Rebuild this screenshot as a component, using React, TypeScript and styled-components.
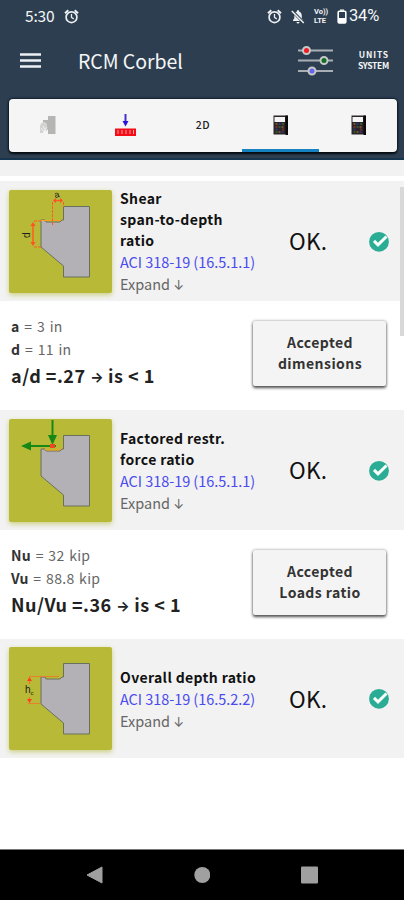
import React from "react";
import styled, { createGlobalStyle } from "styled-components";

const Global = createGlobalStyle`
  * { box-sizing: border-box; }
  body { margin: 0; background: #fff; font-family: "Noto Sans CJK SC", "Noto Sans", sans-serif; }
  svg { display: block; flex: none; }
`;

const Screen = styled.div`
  width: 404px;
  height: 900px;
  display: flex;
  flex-direction: column;
  overflow: hidden;
  background: #fff;
`;

const Header = styled.header`
  height: 160px;
  flex: none;
  background: #2d3e50;
  border-bottom: 2px solid #16354f;
  color: #f4f6f7;
`;

const StatusBar = styled.div`
  height: 32px;
  display: flex;
  align-items: center;
  padding: 0 23px 0 25px;
`;

const Clock = styled.span`
  width: 39px;
  font-size: 15.5px;
  line-height: 30px;
  margin-bottom: 2px;
  letter-spacing: -0.15px;
`;

const StatusIcons = styled.div`
  margin-left: auto;
  display: flex;
  align-items: center;
`;

const Gap = styled.span<{ $w: number }>`
  width: ${(p) => p.$w}px;
`;

const Volte = styled.span`
  width: 15px;
  display: flex;
  flex-direction: column;
  font: 700 7.5px/9px Roboto, sans-serif;
  margin-top: -1px;
`;

const Percent = styled.span`
  width: 32px;
  font: 400 16.5px/30px Roboto, sans-serif;
  letter-spacing: -0.2px;
  white-space: nowrap;
`;

const AppBar = styled.div`
  height: 67px;
  display: flex;
  align-items: center;
  padding: 0 14px 9px 20px;
`;

const AppTitle = styled.h1`
  margin: 0 auto 1px 37px;
  font-size: 19.5px;
  font-weight: 400;
  line-height: 30px;
  letter-spacing: -0.05px;
`;

const Units = styled.div`
  width: 33px;
  margin: 0 0 4px 24px;
  display: flex;
  flex-direction: column;
  align-items: center;
  white-space: nowrap;
  font-weight: 700;
`;

const UnitsTop = styled.span`
  font-size: 8.5px;
  line-height: 11px;
  letter-spacing: 0.85px;
  margin-right: -0.85px;
`;

const UnitsBottom = styled.span`
  font-size: 8.5px;
  line-height: 10px;
  letter-spacing: -0.3px;
`;

const Tabs = styled.nav`
  width: 388px;
  height: 53px;
  margin-left: 9px;
  display: grid;
  grid-template-columns: repeat(5, 1fr);
  background: #f5f5f5;
  border-radius: 4px;
  box-shadow: 0 2px 2px #070d12, 0 0 2px 1px #101d2c;
`;

const Tab = styled.button<{ $active?: boolean }>`
  border: 0;
  padding: 0;
  display: flex;
  align-items: center;
  justify-content: center;
  background: none;
  color: #222;
  font: 500 10.5px/16px "Noto Sans CJK SC", sans-serif;
  letter-spacing: 0.6px;
  border-bottom: 3px solid ${(p) => (p.$active ? "#1782c0" : "transparent")};
  border-top: 2px solid transparent;
`;

const Content = styled.main`
  height: 689px;
  position: relative;
  background: #fff;
`;

const PreviousRow = styled.div`
  height: 16px;
  margin-bottom: 5px;
  background: #f2f2f2;
`;

const Thumb = styled.div`
  position: absolute;
  right: 0;
  top: 27px;
  width: 4px;
  height: 149px;
  background: #d8d8d8;
`;

const Row = styled.section<{ $height: number }>`
  height: ${(p) => p.$height}px;
  display: flex;
  align-items: center;
  padding-left: 9px;
  background: #f2f2f2;
`;

const Sketch = styled.div`
  width: 103px;
  height: 103px;
  flex: none;
  background: #b8ba37;
  border-radius: 2px;
  box-shadow: 0 2px 5px #cccf83;
`;

const Description = styled.div`
  width: 155px;
  margin: 2px 0 0 8px;
  display: flex;
  flex-direction: column;
  white-space: nowrap;
`;

const Name = styled.h2`
  margin: 0;
  color: #111;
  font-size: 14px;
  font-weight: 700;
  line-height: 21px;
  letter-spacing: 0.36px;
  white-space: pre-line;
`;

const Clause = styled.a`
  color: #4a4aef;
  font-size: 14.5px;
  line-height: 22px;
  letter-spacing: -0.05px;
`;

const Expand = styled.span`
  color: #666;
  font-size: 14.5px;
  line-height: 22px;
`;

const Arrow = styled.span<{ $size: number }>`
  font-family: Inter, sans-serif;
  font-size: ${(p) => p.$size}px;
`;

const RightArrow = styled(Arrow)`
  display: inline-block;
  line-height: 14px;
  letter-spacing: 0;
  vertical-align: 1px;
`;

const Verdict = styled.span`
  width: 80px;
  margin: 0 0 2px 14px;
  color: #111;
  font-size: 22.5px;
  line-height: 32px;
  letter-spacing: 0.2px;
`;

const Details = styled.section<{ $height: number }>`
  height: ${(p) => p.$height}px;
  display: flex;
  justify-content: space-between;
  padding: 14px 18px 0 11px;
`;

const Values = styled.div`
  display: flex;
  flex-direction: column;
  white-space: nowrap;
`;

const Value = styled.span`
  color: #666;
  font-size: 14px;
  line-height: 23px;
  letter-spacing: 0.3px;
  word-spacing: 1.2px;
  b { color: #333; }
`;

const Result = styled.strong`
  color: #222;
  font-size: 18px;
  line-height: 28px;
  letter-spacing: 0.5px;
`;

const Accepted = styled.button`
  width: 133px;
  height: 65px;
  margin-top: 6px;
  padding: 0 0 2px 1px;
  border: 0;
  border-radius: 2px;
  background: #f4f4f4;
  box-shadow: 0 2px 3px #555, 0 0 3px #999;
  color: #333;
  font: 700 14px/21px "Noto Sans CJK SC", sans-serif;
  letter-spacing: 0.45px;
  white-space: pre-line;
`;

const NavBar = styled.footer`
  height: 51px;
  display: flex;
  align-items: center;
  background: #000;
  border-top: 1px solid #777;
  padding-left: 86px;
  gap: 91px;
`;

const Alarm = () => (
  <svg width="15" height="15" viewBox="0 0 15 15" fill="none" stroke="#edf0f2">
    <circle cx="7.5" cy="8.2" r="5.4" strokeWidth="1.7" />
    <path d="M1 4.2 4.3 1.3M14 4.2 10.7 1.3" strokeWidth="2" />
    <path d="M7.5 5v3.5l2.3 1.4" strokeWidth="1.3" />
  </svg>
);

const BellOff = () => (
  <svg width="14" height="15" viewBox="0 0 14 15">
    <path d="M2 12V11l1.3-1.4V6.7C3.3 4.6 4.4 3 6 2.6V1.2h2v1.4c1.7.4 2.8 2 2.8 4.1v2.9L12 11v1z" fill="#edf0f2" />
    <path d="M5.5 13h3a1.5 1.5 0 0 1-3 0z" fill="#edf0f2" />
    <path d="M1 1.7 13 14" stroke="#2d3e50" strokeWidth="3" />
    <path d="M.8 2 12.8 14" stroke="#edf0f2" strokeWidth="1.5" />
  </svg>
);

const Battery = () => (
  <svg width="10" height="15" viewBox="0 0 10 15">
    <path d="M3 .5h4v1.3H3z" fill="#fff" />
    <rect x="1.2" y="2.2" width="7.6" height="11.8" rx="1" fill="none" stroke="#fff" strokeWidth="1.6" />
    <path d="M1 9h8v5H1z" fill="#fff" />
  </svg>
);

const Menu = () => (
  <svg width="21" height="16" viewBox="0 0 21 16">
    <path d="M0 1.5h21M0 7.5h21M0 13.5h21" stroke="#edf0f2" strokeWidth="2.7" />
  </svg>
);

const Sliders = () => (
  <svg width="35" height="31" viewBox="0 0 35 31">
    <path d="M0 4.5h35M0 14.5h35M0 25h35" stroke="#a9afb3" strokeWidth="2.2" />
    <g stroke="#c6c9ca" strokeWidth="2">
      <circle cx="8.5" cy="4.5" r="3.5" fill="#f51a20" />
      <circle cx="26" cy="14.5" r="3.5" fill="#146d22" />
      <circle cx="14" cy="25" r="3.5" fill="#6464ec" />
    </g>
  </svg>
);

const CorbelIcon = () => (
  <svg width="17" height="19" viewBox="0 0 17 19">
    <path d="M9 0h7.5v18H9v-4L4 10V4h5z" fill="#b5b6b3" />
    <path d="M1 11c0-3 2-5 5-5l2 2v7l-3-1-1 3H1z" fill="#d3d4d2" />
    <path d="m4 10 2 4 2-3M2 12l2 3" fill="none" stroke="#eee" />
  </svg>
);

const LoadIcon = () => (
  <svg width="23" height="23" viewBox="0 0 23 23">
    <path d="M11.5 0v8" stroke="#4430d0" strokeWidth="2" />
    <path d="M8.5 7h6l-3 5.5z" fill="#2b15d8" />
    <path d="M1 14.5h21V22H1z" fill="#f20d17" />
    <path d="M4 16v4M8 16v4M12 16v4M16 16v4M19.5 16v4" stroke="#ffa1a3" strokeWidth="1" />
  </svg>
);

const Calculator = () => (
  <svg width="15" height="20" viewBox="0 0 15 20">
    <path d="M.5.5h14v19H.5z" fill="#292529" />
    <path d="M1.5 2h10.5v5H1.5z" fill="#f5f5f5" />
    <path d="M12.5.5H15V20h-2.5z" fill="#0c090b" />
    <path d="M2.5 9h2M8.5 12h2M5.5 17h2" stroke="#765026" strokeWidth="2" />
    <path d="M5.5 9h2M2.5 14.5h2M8.5 17h2" stroke="#30366f" strokeWidth="2" />
    <path d="M9 9h2M5.5 12h2M2.5 17h2" stroke="#315631" strokeWidth="2" />
    <path d="M2.5 12h2M9 14.5h2" stroke="#762e30" strokeWidth="2" />
  </svg>
);

const Check = () => (
  <svg width="20" height="21" viewBox="0 0 20 21">
    <circle cx="10" cy="10.8" r="9.9" fill="#2bac94" />
    <path d="m5 9.9 4 4 8.5-8.4" fill="none" stroke="#f8fffc" strokeWidth="3" />
  </svg>
);

type Kind = "span" | "force" | "depth";

const Corbel = ({ kind }: { kind: Kind }) => (
  <svg width="103" height="103" viewBox="0 0 103 103">
    <path
      d="M54.5 16.5h26v70.5h-26V76L32 57V30h4l1 2h14l2-2h1.5z"
      fill="#b3b1b5"
      stroke="#67715e"
      strokeWidth="1"
    />
    {kind === "span" && (
      <g fill="none" stroke="#ff5c22" strokeWidth="1">
        <path d="M32 30.5h20" stroke="#ff9d24" />
        <path d="M43.5 12v24M54.5 12v5M25 31h7M25 57h7" strokeDasharray="3 1" />
        <path d="M45 10.5h8M24 34v20" strokeWidth="1.5" />
        <path d="m47 8-3 2.5 3 2.5zM51 8l3 2.5-3 2.5zM21.5 36l2.5-4 2.5 4zM21.5 52l2.5 4 2.5-4z" fill="#ff5124" stroke="none" />
        <text transform="translate(46 8) rotate(-12)" fill="#222" stroke="none" fontSize="9" fontWeight="500" fontFamily="Liberation Sans">a</text>
        <text transform="translate(21 48) rotate(-90)" fill="#222" stroke="none" fontSize="10" fontFamily="Liberation Sans">d</text>
      </g>
    )}
    {kind === "force" && (
      <g stroke="#168816" fill="#168816">
        <path d="M43.5 1v17M47 27H20" strokeWidth="2" />
        <path d="M39 16h9l-4.5 10zM22 22.5v9L12 27z" stroke="none" />
        <path d="m36 30 1 1h13l3-2" fill="none" stroke="#ff9d24" />
        <path d="M41 25h5v4h-5z" fill="#f6451e" stroke="none" />
      </g>
    )}
    {kind === "depth" && (
      <g fill="none" stroke="#ff6b24">
        <path d="M20 29.5h30M19 56.5h12" stroke="#e7802b" />
        <path d="M20.5 32v5M20.5 50v5" strokeWidth="1" />
        <path d="m18 34 2.5-4 2.5 4zM18 52l2.5 4 2.5-4z" fill="#ff401c" stroke="none" />
        <text x="16" y="46" fill="#222" stroke="none" fontSize="10" fontFamily="Liberation Sans">h<tspan fontSize="6" dy="2">c</tspan></text>
      </g>
    )}
  </svg>
);

const CheckRow = ({ kind, name, clause, height }: { kind: Kind; name: string; clause: string; height: number }) => (
  <Row $height={height}>
    <Sketch><Corbel kind={kind} /></Sketch>
    <Description>
      <Name>{name}</Name>
      <Clause>{clause}</Clause>
      <Expand>Expand <Arrow $size={13}>↓</Arrow></Expand>
    </Description>
    <Verdict>OK.</Verdict>
    <Check />
  </Row>
);

export default function App() {
  return (
    <Screen>
      <Global />
      <Header>
        <StatusBar>
          <Clock>5:30</Clock>
          <Alarm />
          <StatusIcons>
            <Alarm />
            <Gap $w={9} />
            <BellOff />
            <Gap $w={9} />
            <Volte><span>Vo))</span><span>LTE</span></Volte>
            <Gap $w={8} />
            <Battery />
            <Gap $w={2} />
            <Percent>34%</Percent>
          </StatusIcons>
        </StatusBar>
        <AppBar>
          <Menu />
          <AppTitle>RCM Corbel</AppTitle>
          <Sliders />
          <Units><UnitsTop>UNITS</UnitsTop><UnitsBottom>SYSTEM</UnitsBottom></Units>
        </AppBar>
        <Tabs>
          <Tab><CorbelIcon /></Tab>
          <Tab><LoadIcon /></Tab>
          <Tab>2D</Tab>
          <Tab $active><Calculator /></Tab>
          <Tab><Calculator /></Tab>
        </Tabs>
      </Header>
      <Content>
        <PreviousRow />
        <CheckRow kind="span" name={"Shear\nspan-to-depth\nratio"} clause="ACI 318-19 (16.5.1.1)" height={120} />
        <Details $height={109}>
          <Values>
            <Value><b>a</b> = 3 in</Value>
            <Value><b>d</b> = 11 in</Value>
            <Result>a/d =.27 <RightArrow $size={14}>→</RightArrow> is &lt; 1</Result>
          </Values>
          <Accepted>{"Accepted\ndimensions"}</Accepted>
        </Details>
        <CheckRow kind="force" name={"Factored restr.\nforce ratio"} clause="ACI 318-19 (16.5.1.1)" height={120} />
        <Details $height={109}>
          <Values>
            <Value><b>Nu</b> = 32 kip</Value>
            <Value><b>Vu</b> = 88.8 kip</Value>
            <Result>Nu/Vu =.36 <RightArrow $size={14}>→</RightArrow> is &lt; 1</Result>
          </Values>
          <Accepted>{"Accepted\nLoads ratio"}</Accepted>
        </Details>
        <CheckRow kind="depth" name="Overall depth ratio" clause="ACI 318-19 (16.5.2.2)" height={119} />
        <Thumb />
      </Content>
      <NavBar>
        <svg width="17" height="18" viewBox="0 0 17 18"><path d="M16 1v16L1 9z" fill="#a0a0a0" stroke="#a0a0a0" /></svg>
        <svg width="16" height="18" viewBox="0 0 16 18"><circle cx="8.3" cy="9" r="8" fill="#a0a0a0" /></svg>
        <svg width="17" height="18" viewBox="0 0 17 18"><rect y=".5" width="17" height="17" rx="1" fill="#a0a0a0" /></svg>
      </NavBar>
    </Screen>
  );
}
